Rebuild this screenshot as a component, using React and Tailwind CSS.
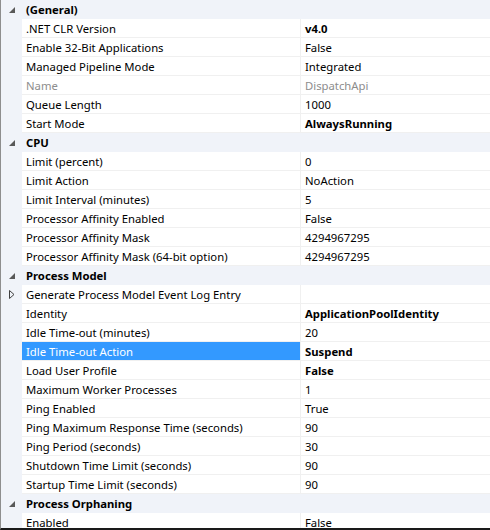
const SECTIONS = [
  {
    title: '(General)',
    rows: [
      { name: '.NET CLR Version', value: 'v4.0', bold: true },
      { name: 'Enable 32-Bit Applications', value: 'False' },
      { name: 'Managed Pipeline Mode', value: 'Integrated' },
      { name: 'Name', value: 'DispatchApi', disabled: true },
      { name: 'Queue Length', value: '1000' },
      { name: 'Start Mode', value: 'AlwaysRunning', bold: true },
    ],
  },
  {
    title: 'CPU',
    rows: [
      { name: 'Limit (percent)', value: '0' },
      { name: 'Limit Action', value: 'NoAction' },
      { name: 'Limit Interval (minutes)', value: '5' },
      { name: 'Processor Affinity Enabled', value: 'False' },
      { name: 'Processor Affinity Mask', value: '4294967295' },
      { name: 'Processor Affinity Mask (64-bit option)', value: '4294967295' },
    ],
  },
  {
    title: 'Process Model',
    rows: [
      { name: 'Generate Process Model Event Log Entry', value: '', expandable: true },
      { name: 'Identity', value: 'ApplicationPoolIdentity', bold: true },
      { name: 'Idle Time-out (minutes)', value: '20' },
      { name: 'Idle Time-out Action', value: 'Suspend', bold: true, selected: true },
      { name: 'Load User Profile', value: 'False', bold: true },
      { name: 'Maximum Worker Processes', value: '1' },
      { name: 'Ping Enabled', value: 'True' },
      { name: 'Ping Maximum Response Time (seconds)', value: '90' },
      { name: 'Ping Period (seconds)', value: '30' },
      { name: 'Shutdown Time Limit (seconds)', value: '90' },
      { name: 'Startup Time Limit (seconds)', value: '90' },
    ],
  },
  {
    title: 'Process Orphaning',
    rows: [{ name: 'Enabled', value: 'False' }],
  },
]

function CollapseGlyph() {
  return (
    <svg width="6" height="6" viewBox="0 0 6 6">
      <path d="M6 0 L6 6 L0 6 Z" fill="#595959" />
    </svg>
  )
}

function ExpandGlyph() {
  return (
    <svg width="6" height="9" viewBox="0 0 6 9">
      <path d="M0.5 0.5 L5 4.5 L0.5 8.5 Z" fill="none" stroke="#404040" strokeWidth="1" />
    </svg>
  )
}

function Header({ title }) {
  return (
    <div className="flex h-[19px] items-center bg-[#f0f3f9]">
      <div className="flex w-[21px] justify-center pl-[1px] pt-[1px]">
        <CollapseGlyph />
      </div>
      <div className="pl-[4px] font-bold text-black">{title}</div>
    </div>
  )
}

function Row({ row }) {
  const nameColor = row.selected
    ? 'bg-[#3399ff] text-white'
    : row.disabled
      ? 'bg-white text-[#8d8d8d]'
      : 'bg-white text-black'
  return (
    <div className="flex h-[19px]">
      <div className="flex w-[21px] items-center justify-center bg-[#f0f3f9] pl-[1px]">
        {row.expandable && <ExpandGlyph />}
      </div>
      <div className={`flex w-[279px] items-center border-b border-r border-[#f0f0f0] pl-[4px] ${nameColor}`}>
        <span className="whitespace-nowrap">{row.name}</span>
      </div>
      <div
        className={`flex flex-1 items-center border-b border-[#f0f0f0] bg-white pl-[4px] ${
          row.disabled ? 'text-[#8d8d8d]' : 'text-black'
        } ${row.bold ? 'font-bold' : ''}`}
      >
        <span className="whitespace-nowrap">{row.value}</span>
      </div>
    </div>
  )
}

export default function App() {
  return (
    <div className="h-[530px] w-[490px] overflow-hidden border-b-2 border-l border-b-[#1a1a1a] border-l-[#8e8e8e] bg-white font-['Noto_Sans',sans-serif] text-[11.3px] leading-[19px]">
      {SECTIONS.map((s) => (
        <div key={s.title}>
          <Header title={s.title} />
          {s.rows.map((r) => (
            <Row key={r.name} row={r} />
          ))}
        </div>
      ))}
    </div>
  )
}
